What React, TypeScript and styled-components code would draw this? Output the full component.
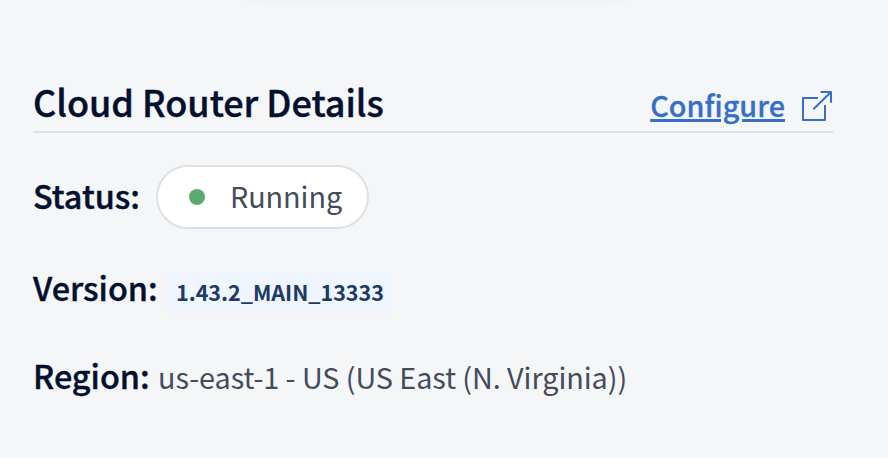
import React from "react";
import styled, { createGlobalStyle } from "styled-components";

const Global = createGlobalStyle`
  body {
    margin: 0;
    background: #f4f6f8;
    font-family: "Source Sans Pro", "Noto Sans CJK SC", sans-serif;
    color: #454b5a;
  }
`;

const Page = styled.main`
  box-sizing: border-box;
  width: 888px;
  height: 458px;
  overflow: hidden;
  padding: 0 55px 0 33px;
  background: #f4f6f8;
`;

const CardEdge = styled.div`
  width: 386px;
  height: 4px;
  margin-left: 210px;
  background: linear-gradient(90deg, #f4f6f8, #f1f2f5 20px, #f1f2f5 366px, #f4f6f8);
`;

const Header = styled.header`
  box-sizing: border-box;
  display: flex;
  align-items: baseline;
  justify-content: space-between;
  height: 56px;
  margin-top: 73px;
  border-bottom: 2px solid #dfe1e4;
`;

const Title = styled.h2`
  margin: 0;
  font-size: 36px;
  line-height: 48px;
  font-weight: 500;
  letter-spacing: -0.03px;
  -webkit-text-stroke: 0.4px #05102f;
  color: #05102f;
  white-space: nowrap;
`;

const ConfigureLink = styled.a`
  display: flex;
  align-items: baseline;
  gap: 17px;
  font-size: 28.8px;
  line-height: 40px;
  font-weight: 500;
  color: #376fc8;
  white-space: nowrap;
  cursor: pointer;

  span {
    -webkit-text-stroke: 0.3px #376fc8;
    text-decoration: underline;
    text-decoration-thickness: 3px;
    text-underline-offset: 2px;
  }

  svg {
    width: 31px;
    height: 31px;
    margin-bottom: -5px;
    transform: translateY(4px);
  }
`;

const Row = styled.div<{ $top: number }>`
  display: flex;
  align-items: center;
  height: 64px;
  margin-top: ${(p) => p.$top}px;
  white-space: nowrap;
`;

const Label = styled.span<{ $width: number }>`
  width: ${(p) => p.$width}px;
  flex: none;
  padding-bottom: 4px;
  font-size: 32.4px;
  line-height: 60px;
  font-weight: 500;
  -webkit-text-stroke: 0.4px #05102f;
  color: #05102f;
`;

const Value = styled.span`
  font-size: 28.8px;
  line-height: 62px;
  letter-spacing: -0.065px;
`;

const Pill = styled.div`
  box-sizing: border-box;
  display: flex;
  align-items: center;
  width: 213px;
  height: 64px;
  padding: 0 0 1px 31px;
  border: 2px solid #dde0e5;
  border-radius: 32px;
  background: #fff;
  font-size: 28.8px;
  letter-spacing: -0.08px;
`;

const PillText = styled.span`
  padding-bottom: 2px;
  line-height: 56px;
`;

const Dot = styled.i`
  width: 16px;
  height: 16px;
  margin-right: 25px;
  border-radius: 50%;
  background: #5caa6e;
`;

const Badge = styled.code`
  box-sizing: border-box;
  width: 225px;
  height: 40px;
  margin-top: 8px;
  padding-left: 9px;
  border-radius: 4px;
  background: #eff6ff;
  font-family: inherit;
  font-size: 21.6px;
  line-height: 38px;
  font-weight: 700;
  letter-spacing: -0.05px;
  color: #203a63;
`;

export default function App() {
  return (
    <>
      <Global />
      <Page>
        <CardEdge />
        <Header>
          <Title>Cloud Router Details</Title>
          <ConfigureLink>
            <span>Configure</span>
            <svg viewBox="0 -1 31 31" fill="none" stroke="#376fc8" strokeWidth="2">
              <path d="M16 7H1v22h22V14M18.5 1H29v10.7M29 1L11.3 18.3" strokeLinejoin="round" />
            </svg>
          </ConfigureLink>
        </Header>
        <Row $top={32}>
          <Label $width={123}>Status:</Label>
          <Pill>
            <Dot />
            <PillText>Running</PillText>
          </Pill>
        </Row>
        <Row $top={28}>
          <Label $width={134}>Version:</Label>
          <Badge>1.43.2_MAIN_13333</Badge>
        </Row>
        <Row $top={24}>
          <Label $width={125}>Region:</Label>
          <Value>us-east-1 - US (US East (N. Virginia))</Value>
        </Row>
      </Page>
    </>
  );
}
